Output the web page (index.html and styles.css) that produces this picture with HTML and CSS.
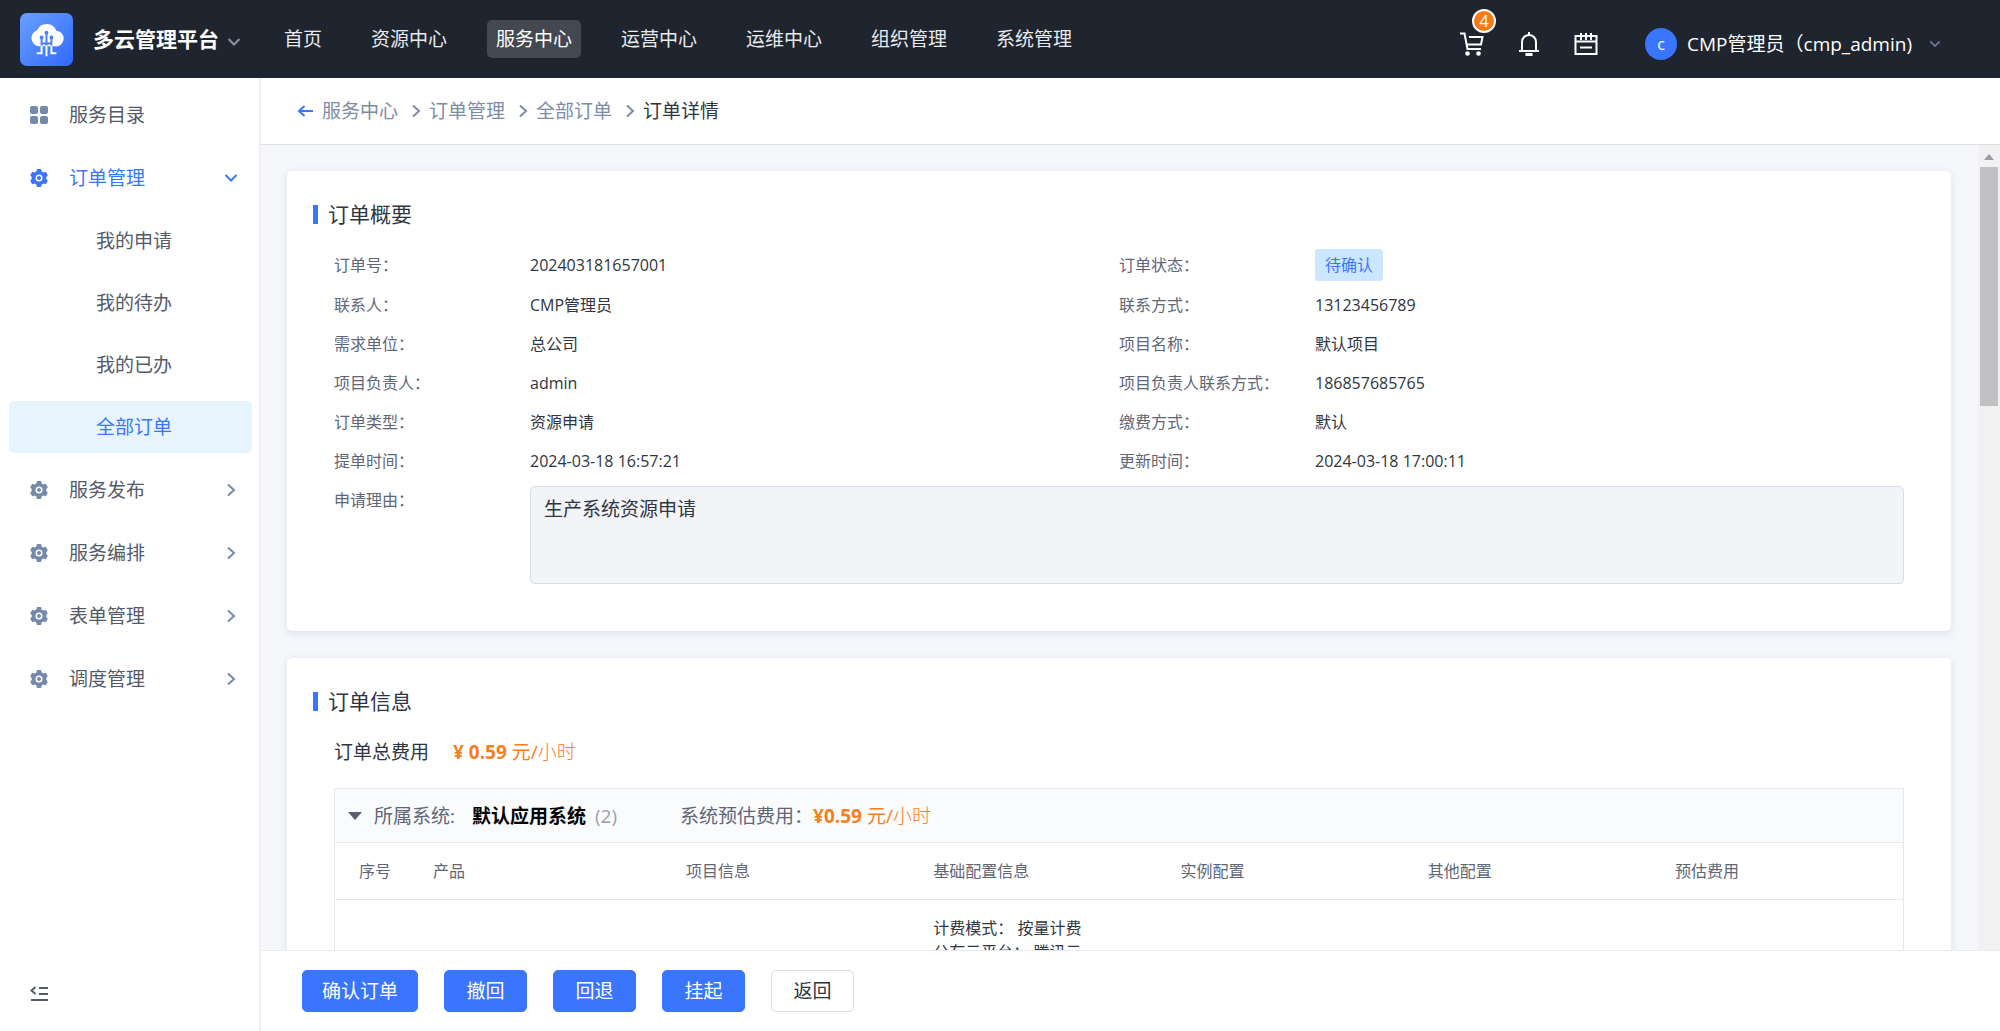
FILE: index.html
```html
<!DOCTYPE html>
<html lang="zh-CN">
<head>
    <meta charset="UTF-8">
    <meta name="viewport" content="width=device-width, initial-scale=1.0">
    <title>订单详情 - 多云管理平台</title>
    <link rel="stylesheet" href="styles.css">
</head>
<body>

<!-- shared icons -->
<svg class="sprite" aria-hidden="true">
    <symbol id="gear" viewBox="0 0 20 20">
        <path fill="currentColor" fill-rule="evenodd" d="M8 1h4l.7 2.5 1.6.9 2.5-.7 2 3.5L17.300 9v2l1.500 1.800-2 3.500-2.500-.7-1.600.9L12 19H8l-.7-2.500-1.600-.9-2.500.7-2-3.500L2.700 11V9L1.200 7.200l2-3.500 2.500.7 1.600-.9zM10 6.500a3.500 3.500 0 1 0 0 7 3.500 3.500 0 0 0 0-7z"/>
        <circle cx="10" cy="10" r="2" fill="currentColor"/>
    </symbol>
    <symbol id="down" viewBox="0 0 14 14">
        <path fill="none" stroke="currentColor" stroke-width="2" d="M1.500 4 7 9.500 12.500 4"/>
    </symbol>
    <symbol id="right" viewBox="0 0 14 14">
        <path fill="none" stroke="currentColor" stroke-width="2" d="M4 1.500 10 7l-6 5.500"/>
    </symbol>
</svg>

<header class="header">
    <div class="logo">
        <svg viewBox="0 0 54 54">
            <defs>
                <linearGradient id="logoBg" x1="0" y1="0" x2="1" y2="1">
                    <stop offset="0" stop-color="#6aa0ff"/>
                    <stop offset="1" stop-color="#3069ff"/>
                </linearGradient>
            </defs>
            <rect width="54" height="54" rx="7" fill="url(#logoBg)"/>
            <path fill="#fff" d="M19 34a8.500 8.500 0 0 1-1.500-16.500 10.500 10.500 0 0 1 19.500.5 8 8 0 0 1-1 16z"/>
            <g fill="none" stroke="#4a80ff" stroke-width="2">
                <path d="M22 25v10M27 20v15M32 25v10M22 31h10"/>
            </g>
            <g fill="none" stroke="#fff" stroke-width="2">
                <path d="M22 33v8h-5M27 33v11M32 33v8h5"/>
            </g>
            <g fill="#4a80ff">
                <circle cx="22" cy="25" r="2"/>
                <circle cx="27" cy="20" r="2"/>
                <circle cx="32" cy="25" r="2"/>
            </g>
        </svg>
    </div>
    <button type="button" class="brand">多云管理平台<svg class="brand-arrow"><use href="#down"/></svg></button>
    <nav class="nav">
        <a href="#">首页</a>
        <a href="#">资源中心</a>
        <a href="#" class="active">服务中心</a>
        <a href="#">运营中心</a>
        <a href="#">运维中心</a>
        <a href="#">组织管理</a>
        <a href="#">系统管理</a>
    </nav>
    <div class="tools">
        <button type="button" class="tool" aria-label="购物车">
            <svg viewBox="0 0 24 24">
                <path fill="none" stroke="#fff" stroke-width="2" d="M0 1.500h4.500L7.500 17H21M9 5h13.500L21 12.500H7"/>
                <circle cx="7.500" cy="21.500" r="2.300" fill="#fff"/>
                <circle cx="18.500" cy="21.500" r="2.300" fill="#fff"/>
            </svg>
            <span class="badge">4</span>
        </button>
        <button type="button" class="tool" aria-label="消息">
            <svg viewBox="0 0 24 24">
                <path fill="none" stroke="#fff" stroke-width="2" d="M2 19h20M5 19v-9a7 7 0 0 1 14 0v9M12 0v3"/>
                <path fill="#fff" d="M8.500 21h7v3h-7z"/>
            </svg>
        </button>
        <button type="button" class="tool" aria-label="日程">
            <svg viewBox="0 0 24 24">
                <path fill="none" stroke="#fff" stroke-width="2" d="M1.500 4h21v18h-21zM1.500 9.500h21M7 1v7M12 1v7M17 1v7M6 15.500h12"/>
            </svg>
        </button>
        <button type="button" class="user">
            <span class="avatar">c</span>
            <span>CMP管理员（cmp_admin)</span>
            <svg class="user-arrow"><use href="#down"/></svg>
        </button>
    </div>
</header>

<div class="layout">
    <aside class="sidebar">
        <nav class="menu">
            <a href="#" class="menu-item">
                <svg class="menu-icon" viewBox="0 0 20 20">
                    <g fill="currentColor">
                        <rect x="1" y="1" width="8" height="8" rx="2"/>
                        <rect x="11" y="1" width="8" height="8" rx="2"/>
                        <rect x="1" y="11" width="8" height="8" rx="2"/>
                        <rect x="11" y="11" width="8" height="8" rx="2"/>
                    </g>
                </svg>
                <span>服务目录</span>
            </a>
            <a href="#" class="menu-item open">
                <svg class="menu-icon"><use href="#gear"/></svg>
                <span>订单管理</span>
                <svg class="menu-arrow"><use href="#down"/></svg>
            </a>
            <div class="submenu">
                <a href="#">我的申请</a>
                <a href="#">我的待办</a>
                <a href="#">我的已办</a>
                <a href="#" class="active">全部订单</a>
            </div>
            <a href="#" class="menu-item">
                <svg class="menu-icon"><use href="#gear"/></svg>
                <span>服务发布</span>
                <svg class="menu-arrow"><use href="#right"/></svg>
            </a>
            <a href="#" class="menu-item">
                <svg class="menu-icon"><use href="#gear"/></svg>
                <span>服务编排</span>
                <svg class="menu-arrow"><use href="#right"/></svg>
            </a>
            <a href="#" class="menu-item">
                <svg class="menu-icon"><use href="#gear"/></svg>
                <span>表单管理</span>
                <svg class="menu-arrow"><use href="#right"/></svg>
            </a>
            <a href="#" class="menu-item">
                <svg class="menu-icon"><use href="#gear"/></svg>
                <span>调度管理</span>
                <svg class="menu-arrow"><use href="#right"/></svg>
            </a>
        </nav>
        <button type="button" class="collapse" aria-label="收起菜单">
            <svg viewBox="0 0 18 18">
                <path fill="none" stroke="currentColor" stroke-width="2" d="M5.500 2 1.500 5.500l4 3.500M9 3h9M9 9h9M1 15h17"/>
            </svg>
        </button>
    </aside>

    <main class="main">
        <nav class="breadcrumb">
            <a href="#" class="back" aria-label="返回上一页">
                <svg viewBox="0 0 16 16">
                    <path fill="none" stroke="currentColor" stroke-width="2" d="M16 8H2M7.500 3 2 8l5.500 5"/>
                </svg>
            </a>
            <a href="#">服务中心</a>
            <svg class="sep"><use href="#right"/></svg>
            <a href="#">订单管理</a>
            <svg class="sep"><use href="#right"/></svg>
            <a href="#">全部订单</a>
            <svg class="sep"><use href="#right"/></svg>
            <span class="current">订单详情</span>
        </nav>

        <div class="scroll">
            <div class="content">
                <section class="card">
                    <h2 class="card-title">订单概要</h2>
                    <dl class="info">
                        <div class="row first"><dt>订单号：</dt><dd>202403181657001</dd></div>
                        <div class="row first"><dt>订单状态：</dt><dd><span class="tag">待确认</span></dd></div>
                        <div class="row"><dt>联系人：</dt><dd>CMP管理员</dd></div>
                        <div class="row"><dt>联系方式：</dt><dd>13123456789</dd></div>
                        <div class="row"><dt>需求单位：</dt><dd>总公司</dd></div>
                        <div class="row"><dt>项目名称：</dt><dd>默认项目</dd></div>
                        <div class="row"><dt>项目负责人：</dt><dd>admin</dd></div>
                        <div class="row"><dt>项目负责人联系方式：</dt><dd>186857685765</dd></div>
                        <div class="row"><dt>订单类型：</dt><dd>资源申请</dd></div>
                        <div class="row"><dt>缴费方式：</dt><dd>默认</dd></div>
                        <div class="row"><dt>提单时间：</dt><dd>2024-03-18 16:57:21</dd></div>
                        <div class="row"><dt>更新时间：</dt><dd>2024-03-18 17:00:11</dd></div>
                    </dl>
                    <div class="reason">
                        <label for="reason">申请理由：</label>
                        <textarea id="reason" readonly>生产系统资源申请</textarea>
                    </div>
                </section>

                <section class="card">
                    <h2 class="card-title">订单信息</h2>
                    <p class="total">订单总费用<span class="price"><b>¥ 0.59</b> 元/<span class="unit">小时</span></span></p>
                    <div class="group">
                        <div class="group-head">
                            <span class="caret"></span>
                            <span>所属系统:</span>
                            <b class="system">默认应用系统</b>
                            <span class="count">(2)</span>
                            <span class="estimate">系统预估费用：</span>
                            <span class="price"><b>¥0.59</b> 元/<span class="unit">小时</span></span>
                        </div>
                        <table class="table">
                            <colgroup>
                                <col class="col-no">
                                <col class="col-product">
                                <col>
                                <col>
                                <col>
                                <col>
                                <col class="col-fee">
                            </colgroup>
                            <thead>
                                <tr>
                                    <th>序号</th>
                                    <th>产品</th>
                                    <th>项目信息</th>
                                    <th>基础配置信息</th>
                                    <th>实例配置</th>
                                    <th>其他配置</th>
                                    <th>预估费用</th>
                                </tr>
                            </thead>
                            <tbody>
                                <tr>
                                    <td></td>
                                    <td></td>
                                    <td></td>
                                    <td>计费模式： 按量计费<br>公有云平台： 腾讯云</td>
                                    <td></td>
                                    <td></td>
                                    <td></td>
                                </tr>
                            </tbody>
                        </table>
                    </div>
                </section>
            </div>
            <div class="scrollbar" aria-hidden="true">
                <span class="scroll-up"></span>
                <span class="thumb"></span>
            </div>
        </div>

        <footer class="actions">
            <button type="button" class="btn primary">确认订单</button>
            <button type="button" class="btn primary">撤回</button>
            <button type="button" class="btn primary">回退</button>
            <button type="button" class="btn primary">挂起</button>
            <button type="button" class="btn">返回</button>
        </footer>
    </main>
</div>

</body>
</html>
```

FILE: styles.css
```css
* {
    box-sizing: border-box;
}

body {
    font-family: "Open Sans", "Noto Sans CJK SC", sans-serif;
    font-size: 19px;
    line-height: 28px;
    color: #2f3542;
    background-color: #fff;
    display: flex;
    flex-direction: column;
    height: 100vh;
    margin: 0;
    overflow: hidden;
}

a {
    color: inherit;
    text-decoration: none;
}

button {
    font: inherit;
    color: inherit;
    background: none;
    border: none;
    padding: 0;
    cursor: pointer;
}

svg {
    display: block;
    flex: none;
}

.sprite {
    position: absolute;
    width: 0;
    height: 0;
}

/* top bar */
.header {
    display: flex;
    align-items: center;
    flex: none;
    height: 78px;
    padding: 0 59px 0 20px;
    background-color: #1f252f;
    color: #e8eaee;
}

.logo svg {
    width: 53px;
    height: 53px;
}

.brand {
    display: flex;
    align-items: center;
    gap: 8px;
    margin: 0 34px 0 20px;
    font-size: 21px;
    font-weight: bold;
    color: #fff;
    white-space: nowrap;
}

.brand-arrow {
    width: 14px;
    height: 14px;
    margin-top: 6px;
    color: #8d94a3;
}

.nav {
    display: flex;
    gap: 31px;
    white-space: nowrap;
}

.nav a {
    padding: 5px 9px;
    border-radius: 5px;
}

.nav .active {
    background-color: #444850;
    color: #fff;
}

.tools {
    display: flex;
    align-items: center;
    gap: 33px;
    margin-left: auto;
    padding-top: 9px;
    color: #fff;
}

.tool {
    position: relative;
}

.tool svg {
    width: 24px;
    height: 24px;
}

.badge {
    position: absolute;
    top: -23px;
    left: 12px;
    width: 24px;
    height: 24px;
    border: 2px solid #fff;
    border-radius: 50%;
    background-color: #f77a18;
    font-size: 16px;
    line-height: 20px;
    text-align: center;
}

.user {
    display: flex;
    align-items: center;
    gap: 10px;
    margin-left: 14px;
    white-space: nowrap;
}

.avatar {
    width: 32px;
    height: 32px;
    border-radius: 50%;
    background-color: #3a75ff;
    font-size: 16px;
    line-height: 32px;
    text-align: center;
}

.user-arrow {
    width: 12px;
    height: 12px;
    margin-left: 7px;
    color: #6e7b96;
}

/* left menu */
.layout {
    display: flex;
    flex: 1;
    min-height: 0;
}

.sidebar {
    display: flex;
    flex-direction: column;
    justify-content: space-between;
    flex: none;
    width: 261px;
    padding: 11px 7px 28px 9px;
    border-right: 2px solid #eceef3;
    color: #535a6b;
}

.menu {
    display: flex;
    flex-direction: column;
    gap: 11px;
}

.menu-item {
    display: flex;
    align-items: center;
    height: 52px;
    padding: 0 14px 0 20px;
}

.menu-icon {
    width: 20px;
    height: 20px;
    margin-right: 20px;
    color: #7589ab;
}

.menu-arrow {
    width: 14px;
    height: 14px;
    margin-left: auto;
    color: #7589ab;
}

.open,
.open svg {
    color: #3a75ff;
}

.submenu {
    display: flex;
    flex-direction: column;
    gap: 10px;
}

.submenu a {
    height: 52px;
    padding-left: 87px;
    border-radius: 5px;
    line-height: 52px;
}

.submenu .active {
    background-color: #e7f4fe;
    color: #3a75ff;
}

.collapse {
    align-self: flex-start;
    margin-left: 21px;
}

.collapse svg {
    width: 18px;
    height: 18px;
}

/* breadcrumb */
.main {
    display: flex;
    flex-direction: column;
    flex: 1;
    min-width: 0;
}

.breadcrumb {
    display: flex;
    align-items: center;
    flex: none;
    height: 67px;
    padding-left: 36px;
    border-bottom: 1px solid #dcdfe6;
    color: #7d8ba6;
}

.back {
    margin-right: 9px;
    color: #3a75ff;
}

.back svg {
    width: 16px;
    height: 16px;
}

.sep {
    width: 14px;
    height: 14px;
    margin: 0 6px 0 11px;
}

.current {
    color: #2f3542;
}

/* scrolling content */
.scroll {
    display: flex;
    flex: 1;
    min-height: 0;
    background-color: #f5f7fb;
}

.content {
    flex: 1;
    min-width: 0;
    padding: 26px 27px 0 26px;
    overflow: hidden;
}

.scrollbar {
    display: flex;
    flex-direction: column;
    align-items: center;
    flex: none;
    gap: 7px;
    width: 22px;
    padding-top: 9px;
    background-color: #f1f1f1;
}

.scroll-up {
    border: 5px solid transparent;
    border-top: none;
    border-bottom: 6px solid #9a9ca3;
}

.thumb {
    width: 18px;
    height: 30%;
    background-color: #c1c1c3;
}

.card {
    padding: 26px 47px 47px;
    margin-bottom: 27px;
    border-radius: 5px;
    background-color: #fff;
    box-shadow: 0 2px 8px rgba(30, 40, 70, 0.12);
}

.card-title {
    display: flex;
    align-items: center;
    gap: 10px;
    margin: 0 0 0 -21px;
    font-size: 21px;
    font-weight: normal;
    line-height: 34px;
}

.card-title::before {
    content: "";
    width: 5px;
    height: 19px;
    background-color: #3a75ff;
}

.info {
    display: grid;
    grid-template-columns: 1fr 1fr;
    margin: 13px 0 0;
    font-size: 16px;
}

.row {
    display: flex;
    align-items: center;
    height: 39px;
}

.row.first {
    height: 41px;
}

.row dt,
.reason label {
    flex: none;
    width: 196px;
    color: #5f6678;
}

.row dd {
    margin: 0;
}

.tag {
    display: block;
    padding: 0 10px;
    border-radius: 3px;
    background-color: #cce6ff;
    color: #3a75ff;
    line-height: 32px;
}

.reason {
    display: flex;
    margin-top: 6px;
}

.reason label {
    font-size: 16px;
}

.reason textarea {
    flex: 1;
    height: 98px;
    padding: 8px 13px;
    border: 1px solid #d9dce5;
    border-radius: 5px;
    background-color: #f3f4f8;
    color: inherit;
    font: inherit;
    resize: none;
    outline: none;
}

/* order items */
.total {
    margin: 20px 0 22px;
}

.total .price {
    margin-left: 24px;
}

.price {
    color: #f5801f;
}

.unit {
    font-weight: 300;
}

.group {
    border: 1px solid #e6e8ef;
}

.group-head {
    display: flex;
    align-items: center;
    height: 54px;
    padding-left: 13px;
    border-bottom: 1px solid #e6e8ef;
    background-color: #fafbfd;
    color: #5f6678;
}

.caret {
    margin-right: 12px;
    border: 7px solid transparent;
    border-top: 8px solid #5a6070;
    border-bottom: none;
}

.system {
    margin: 0 9px 0 17px;
    color: #000;
}

.count {
    color: #9a9fac;
}

.estimate {
    margin-left: 63px;
}

.table {
    width: 100%;
    border-collapse: collapse;
    table-layout: fixed;
    font-size: 16px;
    line-height: 24px;
}

.col-no {
    width: 85px;
}

.col-product {
    width: 253px;
}

.col-fee {
    width: 241px;
}

.table th {
    padding: 16px 13px;
    border-bottom: 1px solid #e6e8ef;
    color: #5f6678;
    font-weight: normal;
    text-align: left;
}

.table th:first-child {
    padding-left: 24px;
}

.table td {
    padding: 16px 13px;
}

/* bottom buttons */
.actions {
    display: flex;
    align-items: center;
    gap: 26px;
    flex: none;
    height: 81px;
    padding-left: 41px;
    border-top: 1px solid #e8eaf0;
}

.btn {
    min-width: 83px;
    height: 42px;
    padding: 0 19px;
    border: 1px solid #d9dce5;
    border-radius: 5px;
    background-color: #fff;
}

.btn.primary {
    border-color: #3a75ff;
    background-color: #3a75ff;
    color: #fff;
}
```
